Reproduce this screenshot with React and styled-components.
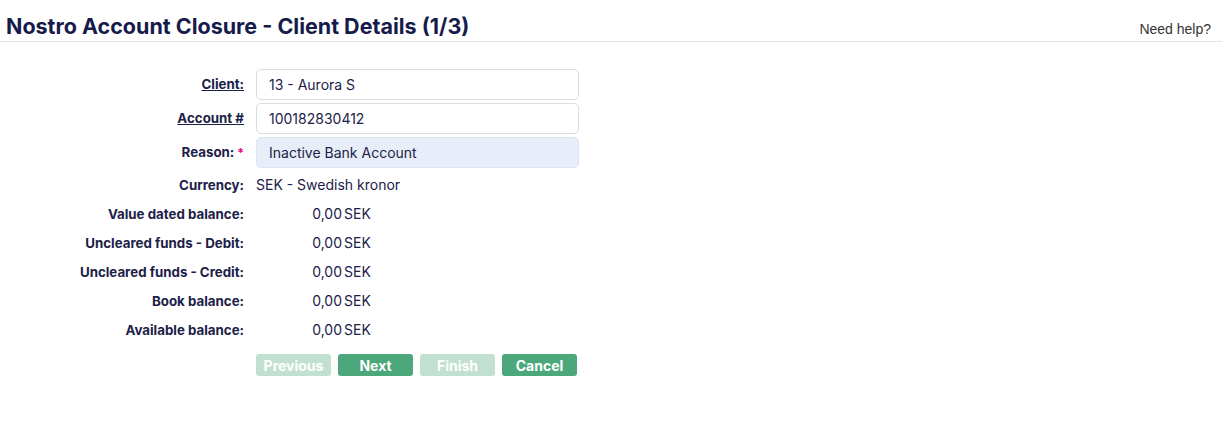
import React from "react";
import styled, { createGlobalStyle } from "styled-components";

const GlobalStyle = createGlobalStyle`
  body {
    margin: 0;
    background: #ffffff;
    font-family: "Inter", "Noto Sans", sans-serif;
    color: #1c2147;
  }
`;

const Header = styled.header`
  display: flex;
  justify-content: space-between;
  align-items: baseline;
  height: 42px;
  box-sizing: border-box;
  padding: 13px 11px 0 6px;
  border-bottom: 1px solid #e2e2e2;
`;

const Title = styled.h1`
  margin: 0;
  font-size: 21.5px;
  line-height: 26px;
  font-weight: 700;
  color: #161b4b;
`;

const Help = styled.a`
  font-family: "Liberation Sans", Arial, sans-serif;
  font-size: 14px;
  color: #333333;
  text-decoration: none;
`;

const Form = styled.div`
  display: grid;
  grid-template-columns: 244px 323px;
  column-gap: 12px;
  row-gap: 3px;
  margin-top: 27px;
  align-items: center;
`;

const Label = styled.div`
  text-align: right;
  font-size: 13.3px;
  font-weight: 700;
  color: #1c2147;
  text-decoration: ${(p) => (p.$link ? "underline" : "none")};
  line-height: ${(p) => (p.$tall ? "31px" : "26px")};
  margin-top: ${(p) => (p.$first ? "1px" : "0")};
`;

const Required = styled.span`
  color: #e5007d;
  margin-left: 3px;
  font-size: 12px;
`;

const Field = styled.div`
  height: 31px;
  box-sizing: border-box;
  border: 1px solid ${(p) => (p.$filled ? "#dde3ef" : "#dcdcdc")};
  background: ${(p) => (p.$filled ? "#e7eefa" : "#ffffff")};
  border-radius: 5px;
  padding: 0 12px;
  display: flex;
  align-items: center;
  font-size: 14px;
  color: #1c2147;
`;

const Text = styled.div`
  font-size: 14px;
  line-height: 26px;
  color: #1c2147;
  margin-top: 1px;
`;

const Amount = styled.div`
  display: flex;
  font-size: 14px;
  line-height: 26px;
  color: #1c2147;
`;

const Figure = styled.span`
  width: 86px;
  text-align: right;
  margin-right: 2px;
`;

const Buttons = styled.div`
  grid-column: 2;
  display: flex;
  gap: 7px;
  margin-top: 8px;
`;

const Button = styled.button`
  width: 75px;
  height: 22px;
  border: none;
  border-radius: 3px;
  padding: 0;
  font-family: "Inter", sans-serif;
  font-size: 14px;
  font-weight: 700;
  color: #ffffff;
  background: ${(p) => (p.disabled ? "#c2e0d2" : "#4ca87b")};
`;

const balances = [
  "Value dated balance:",
  "Uncleared funds - Debit:",
  "Uncleared funds - Credit:",
  "Book balance:",
  "Available balance:",
];

export default function App() {
  return (
    <>
      <GlobalStyle />
      <Header>
        <Title>Nostro Account Closure - Client Details (1/3)</Title>
        <Help href="#">Need help?</Help>
      </Header>
      <Form>
        <Label $link $tall>Client:</Label>
        <Field>13 - Aurora S</Field>
        <Label $link $tall>Account #</Label>
        <Field>100182830412</Field>
        <Label $tall>
          Reason:<Required>*</Required>
        </Label>
        <Field $filled>Inactive Bank Account</Field>
        <Label $first>Currency:</Label>
        <Text>SEK - Swedish kronor</Text>
        {balances.map((b) => (
          <React.Fragment key={b}>
            <Label>{b}</Label>
            <Amount>
              <Figure>0,00</Figure>SEK
            </Amount>
          </React.Fragment>
        ))}
        <Buttons>
          <Button disabled>Previous</Button>
          <Button>Next</Button>
          <Button disabled>Finish</Button>
          <Button>Cancel</Button>
        </Buttons>
      </Form>
    </>
  );
}
